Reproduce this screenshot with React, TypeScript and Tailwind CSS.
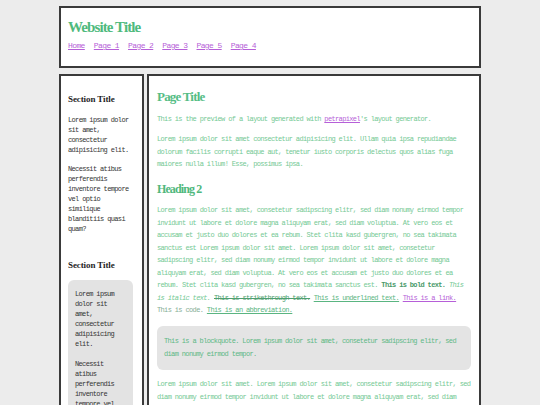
const mono = "font-['Liberation_Mono',monospace] text-[7px] tracking-[-0.64px]";
const serif = "font-['Liberation_Serif',serif] font-bold";

const navLinks = ['Home', 'Page 1', 'Page 2', 'Page 3', 'Page 5', 'Page 4'];

function Header() {
  return (
    <header className="h-[62px] border-2 border-[#3a3a3a] bg-white px-[7px] pt-[10px]">
      <h1 className={`${serif} text-[15px] leading-[18px] tracking-[-0.9px] text-[#4fba7d]`}>Website Title</h1>
      <nav className="mt-[5px] flex gap-[9px] font-['Liberation_Mono',monospace] text-[8px] leading-[10px] tracking-[-0.6px]">
        {navLinks.map((label) => (
          <a key={label} href="#" className="text-[#b65fd8] underline">
            {label}
          </a>
        ))}
      </nav>
    </header>
  );
}

function Sidebar() {
  return (
    <aside className="w-[85px] shrink-0 border-2 border-[#3a3a3a] bg-white pl-[7px] pr-[9px] pt-[17px] pb-[20px]">
      <h2 className={`${serif} text-[9px] leading-[12px] tracking-[-0.1px] text-[#1f1f1f]`}>Section Title</h2>
      <div className={`${mono} mt-[10px] leading-[10px] text-[#333]`}>
        <p>Lorem ipsum dolor sit amet, consectetur adipisicing elit.</p>
        <p className="mt-[9px]">Necessit atibus perferendis inventore tempore vel optio similique blanditiis quasi quam?</p>
      </div>

      <h2 className={`${serif} mt-[25px] text-[9px] leading-[12px] tracking-[-0.1px] text-[#1f1f1f]`}>Section Title</h2>
      <div className={`${mono} mt-[9px] rounded-[6px] bg-[#e3e3e3] px-[7px] pt-[9px] pb-[10px] leading-[10px] text-[#333]`}>
        <p>Lorem ipsum dolor sit amet, consectetur adipisicing elit.</p>
        <p className="mt-[10px]">Necessit atibus perferendis inventore tempore vel optio similique blanditiis quasi quam?</p>
      </div>
    </aside>
  );
}

function Main() {
  return (
    <main className="min-w-0 flex-1 border-2 border-[#3a3a3a] bg-white px-[8px] pt-[13px] pb-[20px]">
      <h1 className={`${serif} text-[13px] leading-[16px] tracking-[-0.8px] text-[#55bd85]`}>Page Title</h1>
      <div className={`${mono} leading-[12.5px] text-[#74c994]`}>
        <p className="mt-[8px]">
          This is the preview of a layout generated with{' '}
          <a href="#" className="text-[#b65fd8] underline">
            petrapixel
          </a>
          's layout generator.
        </p>
        <p className="mt-[7.5px]">
          Lorem ipsum dolor sit amet consectetur adipisicing elit. Ullam quia ipsa repudiandae dolorum facilis corrupti
          eaque aut, tenetur iusto corporis delectus quos alias fuga maiores nulla illum! Esse, possimus ipsa.
        </p>
      </div>

      <h2 className={`${serif} mt-[11px] text-[12px] leading-[15px] tracking-[-0.9px] text-[#4fb87d]`}>Heading 2</h2>

      <div className={`${mono} leading-[12.5px] text-[#74c994]`}>
        <p className="mt-[7.5px]">
          Lorem ipsum dolor sit amet, consetetur sadipscing elitr, sed diam nonumy eirmod tempor invidunt ut labore et
          dolore magna aliquyam erat, sed diam voluptua. At vero eos et accusam et justo duo dolores et ea rebum. Stet
          clita kasd gubergren, no sea takimata sanctus est Lorem ipsum dolor sit amet. Lorem ipsum dolor sit amet,
          consetetur sadipscing elitr, sed diam nonumy eirmod tempor invidunt ut labore et dolore magna aliquyam erat, sed
          diam voluptua. At vero eos et accusam et justo duo dolores et ea rebum. Stet clita kasd gubergren, no sea
          takimata sanctus est. <b className="font-bold text-[#4a9a6a]">This is bold text.</b>{' '}
          <i className="italic">This is italic text.</i>{' '}
          <s className="text-[#4f9f70]">This is strikethrough text.</s>{' '}
          <u className="text-[#5ab581]">This is underlined text.</u>{' '}
          <a href="#" className="text-[#b65fd8] underline">
            This is a link.
          </a>{' '}
          <code className="font-['Liberation_Mono',monospace] text-[#86ae95]">This is code.</code>{' '}
          <abbr title="abbreviation" className="text-[#5ab581] underline decoration-solid">
            This is an abbreviation.
          </abbr>
        </p>

        <blockquote className="mt-[9.5px] rounded-[6px] bg-[#e4e4e4] px-[7px] pt-[9px] pb-[10px] text-[#5db885]">
          This is a blockquote. Lorem ipsum dolor sit amet, consetetur sadipscing elitr, sed diam nonumy eirmod tempor.
        </blockquote>

        <p className="mt-[8px]">
          Lorem ipsum dolor sit amet. Lorem ipsum dolor sit amet, consetetur sadipscing elitr, sed diam nonumy eirmod
          tempor invidunt ut labore et dolore magna aliquyam erat, sed diam voluptua. At vero eos et accusam et justo duo
          dolores et ea rebum.
        </p>
      </div>
    </main>
  );
}

export default function App() {
  return (
    <div className="min-h-screen bg-[#ececec] pt-[6px]">
      <div className="mx-auto w-[422px]">
        <Header />
        <div className="mt-[6px] flex items-start gap-[3px]">
          <Sidebar />
          <Main />
        </div>
      </div>
    </div>
  );
}
